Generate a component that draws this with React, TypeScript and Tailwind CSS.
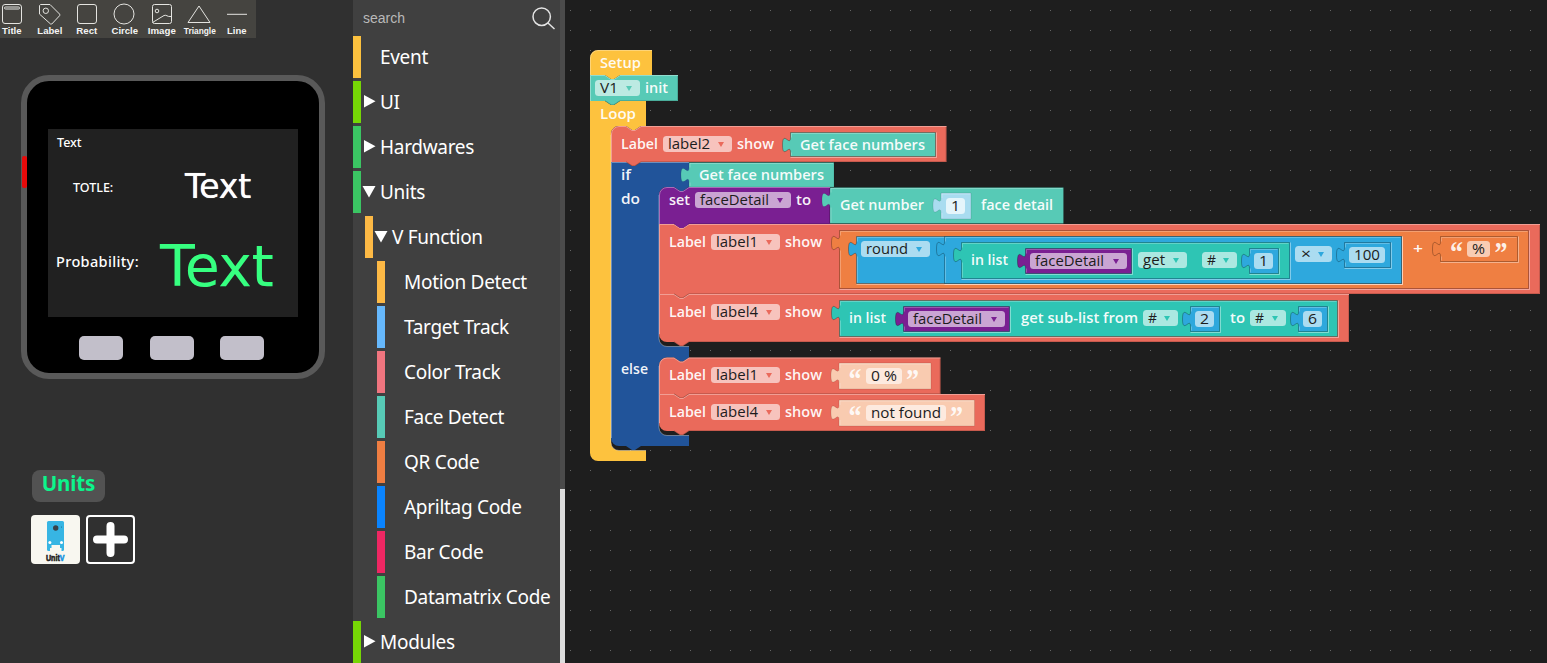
import React from "react";

/* ---------- UI designer toolbar ---------- */

const tools: { name: string; width: number; icon: React.ReactNode }[] = [
  {
    name: "Title",
    width: 19.5,
    icon: (
      <>
        <rect x="1.5" y="1.5" width="19" height="19" rx="2.5" />
        <rect x="3.5" y="4" width="15" height="2" rx="1" />
      </>
    ),
  },
  {
    name: "Label",
    width: 25,
    icon: (
      <>
        <path d="M1.5 2.5v8.6L12.6 21l1.2 0L21.7 12.6v-1.4L12 1.5H2.6z" />
        <circle cx="7.8" cy="7.8" r="2.7" />
      </>
    ),
  },
  { name: "Rect", width: 21, icon: <rect x="1.5" y="1.5" width="19" height="19" rx="2.5" /> },
  { name: "Circle", width: 26.5, icon: <circle cx="11" cy="11" r="10" /> },
  {
    name: "Image",
    width: 28,
    icon: (
      <>
        <rect x="1.5" y="1.5" width="19" height="19" rx="2" />
        <circle cx="6" cy="8" r="1.8" />
        <path d="M1.500 19.500 13 12.500q2-.6 3 .3t4.500.7" />
      </>
    ),
  },
  { name: "Triangle", width: 32, icon: <path d="M11 3 22 19.500H0z" /> },
  { name: "Line", width: 19.5, icon: <path d="M1 11.3h20" /> },
];

function Toolbar() {
  return (
    <div className="-ml-[7px] flex h-[38px] w-[263px] bg-[#454440]">
      {tools.map((t) => (
        <div key={t.name} className="flex w-[37.5px] shrink-0 flex-col items-center pt-[3px]">
          <svg width="22" height="22" viewBox="0 0 22 22" fill="none" stroke="#e4e4e0" strokeWidth="1" className="overflow-visible">
            {t.icon}
          </svg>
          <svg width="37" height="12" viewBox="0 0 37 12" className="overflow-visible">
            <text
              x="18.8"
              y="9"
              textAnchor="middle"
              fontFamily="Liberation Sans"
              fontWeight="700"
              fontSize={t.name === "Triangle" ? 8.5 : 9.5}
              textLength={t.width}
              lengthAdjust="spacingAndGlyphs"
              fill="#f4f4f4"
            >
              {t.name}
            </text>
          </svg>
        </div>
      ))}
    </div>
  );
}

function Device() {
  return (
    <div className="relative mt-[37px] ml-[21px] h-[304px] w-[304px] rounded-[28px] border-[6px] border-[#595959] bg-black">
      <div className="absolute top-[75px] -left-[5px] h-[32px] w-[5px] rounded-[2px] bg-[#e60a0a]" />
      <div className="relative mt-[48px] ml-[21px] h-[188px] w-[250px] bg-[#212121] font-['Noto_Sans',sans-serif] text-white">
        <span className="absolute top-[5px] left-[9px] text-[12.5px] leading-[18px] font-medium">Text</span>
        <span className="absolute top-[50px] left-[25px] text-[12.5px] leading-[18px] font-medium">
          TOTLE:
        </span>
        <span className="absolute top-[37px] left-[137px] font-['DejaVu_Sans'] text-[33px] leading-[42px] tracking-[-0.2px] [text-shadow:0_0_0.7px_white]">
          Text
        </span>
        <span className="absolute top-[122px] left-[8px] text-[14.5px] leading-[20px] font-medium tracking-[0.35px]">
          Probability:
        </span>
        <span className="absolute top-[101px] left-[112px] font-['DejaVu_Sans'] text-[57px] leading-[72px] tracking-[-0.5px] text-[#36ff80]">
          Text
        </span>
      </div>
      <div className="mt-[19px] ml-[52px] flex gap-[26.5px]">
        {[0, 1, 2].map((i) => (
          <div key={i} className="h-6 w-11 rounded-[5px] bg-[#c2bfca]" />
        ))}
      </div>
    </div>
  );
}

function UnitsPanel() {
  return (
    <div className="mt-[91px] ml-[31px]">
      <div className="ml-px flex h-[32px] w-[73px] justify-center rounded-lg bg-[#525252] font-['Noto_Sans',sans-serif] text-[20.5px] leading-[27px] font-bold tracking-[-0.1px] text-[#0cf58c]">
        Units
      </div>
      <div className="mt-[13px] flex gap-[6px]">
        <div className="h-[49px] w-[49px] overflow-hidden rounded-[4px] bg-[#f8f7f0]">
          <svg width="49" height="49" viewBox="0 0 49 49">
            <rect x="16" y="6" width="17" height="30" rx="1.5" fill="#37b5e3" />
            <circle cx="24.7" cy="13" r="2.7" fill="#3a4248" />
            <circle cx="30.5" cy="12" r=".5" fill="#1b5f7c" />
            <circle cx="18.9" cy="27.5" r="1.5" fill="#fff" />
            <circle cx="30.5" cy="27.5" r="1.5" fill="#fff" />
            <path d="M20.5 30h8.500v6h-8.500z" fill="#f8f7f0" />
            <path d="M19 33h2v3h-2zM28.500 33h2v3h-2z" fill="#f8f7f0" />
            <text x="15" y="45.500" fontFamily="Liberation Sans" fontWeight="900" fontSize="9" textLength="18.500" lengthAdjust="spacingAndGlyphs" fill="#222" stroke="#222" strokeWidth=".6">
              Unit<tspan fill="#1693df" stroke="#1693df">V</tspan>
            </text>
          </svg>
        </div>
        <div className="h-[49px] w-[49px] rounded-[4px] border-2 border-white">
          <svg width="45" height="45" viewBox="0 0 45 45" stroke="#fff" strokeWidth="8" strokeLinecap="round">
            <path d="M22.500 9v27M9 22.500h27" />
          </svg>
        </div>
      </div>
    </div>
  );
}

/* ---------- Toolbox ---------- */

type Row = { label: string; bar: string; indent: string; state?: "open" | "closed" };

const rows: Row[] = [
  { label: "Event", bar: "bg-[#fcc13e]", indent: "ml-0" },
  { label: "UI", bar: "bg-[#76d605]", indent: "ml-0", state: "closed" },
  { label: "Hardwares", bar: "bg-[#3bc563]", indent: "ml-0", state: "closed" },
  { label: "Units", bar: "bg-[#3bc563]", indent: "ml-0", state: "open" },
  { label: "V Function", bar: "bg-[#fdb945]", indent: "ml-3", state: "open" },
  { label: "Motion Detect", bar: "bg-[#fdb945]", indent: "ml-6" },
  { label: "Target Track", bar: "bg-[#66b8fc]", indent: "ml-6" },
  { label: "Color Track", bar: "bg-[#f0757f]", indent: "ml-6" },
  { label: "Face Detect", bar: "bg-[#57cab6]", indent: "ml-6" },
  { label: "QR Code", bar: "bg-[#ef7e42]", indent: "ml-6" },
  { label: "Apriltag Code", bar: "bg-[#0a84ff]", indent: "ml-6" },
  { label: "Bar Code", bar: "bg-[#ef2763]", indent: "ml-6" },
  { label: "Datamatrix Code", bar: "bg-[#3bc563]", indent: "ml-6" },
  { label: "Modules", bar: "bg-[#76d605]", indent: "ml-0", state: "closed" },
];

function Toolbox() {
  return (
    <div className="flex h-full w-[212px] shrink-0 bg-[#404040]">
      <div className="flex w-[207px] flex-col overflow-hidden">
        <div className="flex h-[36px] shrink-0 items-center justify-between pr-[4px] pl-[10px]">
          <span className="font-['Liberation_Sans'] text-[14px] text-[#b9b9b9]">search</span>
          <svg width="26" height="26" viewBox="0 0 26 26" fill="none" stroke="#e4e4e4" strokeWidth="1.5">
            <circle cx="11.700" cy="11.700" r="8.700" />
            <path d="m18 18 6.500 6" />
          </svg>
        </div>
        {rows.map((r) => (
          <div key={r.label} className={`mb-[3px] flex h-[42px] shrink-0 items-center ${r.indent}`}>
            <div className={`h-full w-2 shrink-0 ${r.bar}`} />
            <svg width="19" height="14" viewBox="0 0 19 14" fill="#fff" className="shrink-0">
              {r.state === "closed" && <path d="M3 0v12.500L14.500 6.200z" />}
              {r.state === "open" && <path d="M1.500 1h13L8 12.500z" />}
            </svg>
            <span className="pt-px font-['Noto_Sans',sans-serif] text-[19px] leading-none tracking-[-0.3px] whitespace-nowrap text-white">
              {r.label}
            </span>
          </div>
        ))}
      </div>
      <div className="flex h-full w-[5px] flex-col justify-end bg-[#4b4b4b]">
        <div className="h-[174px] w-full bg-[#dcdcdc]" />
      </div>
    </div>
  );
}

/* ---------- Block canvas ---------- */

const C = {
  yellow: "#fdc23e",
  mint: "#57cab6",
  red: "#ea6a5b",
  navy: "#21549a",
  purple: "#7a1f92",
  orange: "#ef7f42",
  blue: "#2ea8dd",
  teal: "#2ec5b4",
  sky: "#a9dcf0",
  peach: "#f9cbb0",
};

const NOTCH = "l6,4 3,0 6,-4";
const NOTCH_BACK = "l-6,4 -3,0 -6,-4";
const TAB_UP = "V20c0,-10 -8,8 -8,-7.500s8,2.500 8,-7.500";

/** A statement block: notch on top, tab below. */
function Stack({ x, y, w, h, c, first, last }: { x: number; y: number; w: number; h: number; c: string; first?: boolean; last?: boolean }) {
  const start = first ? "M0,8A8,8 0,0,1 8,0" : "M0,0";
  const left = last ? `H8a8,8 0,0,1 -8,-8` : "H0";
  const topEdge = `${start}H15${NOTCH}H${w}`;
  return (
    <g transform={`translate(${x},${y})`}>
      <path d={`${topEdge}V${h}H30${NOTCH_BACK}${left}z`} fill={c} />
      <path d={`M.5,${h - (last ? 8 : 0)}V${first ? 8 : 0.5}${first ? "A7.500,7.500 0,0,1 8,.5" : ""}H15${NOTCH}H${w}`} fill="none" stroke="#fff" strokeOpacity=".35" />
      <path d={`M${w - 0.5},1V${h - 0.5}H30${NOTCH_BACK}`} fill="none" stroke="#000" strokeOpacity=".15" />
    </g>
  );
}

/** A value block with its puzzle tab on the left side. */
function Value({ x, y, w, h, c, plain }: { x: number; y: number; w: number; h: number; c: string; plain?: boolean }) {
  const d = `M0,0H${w}V${h}H0${TAB_UP}z`;
  return (
    <g transform={`translate(${x},${y})`}>
      {!plain && <path d={`M0,${h + 1}H${w + 1}V0`} fill="none" stroke="#fff" strokeOpacity=".4" />}
      <path d={d} fill={c} stroke="#000" strokeOpacity={plain ? 0.1 : 0.28} />
      <path d={`M1,${h - 1}V20M1,5V1H${w - 1}`} fill="none" stroke="#fff" strokeOpacity=".25" />
    </g>
  );
}

/** Text fitted to a known width. */
function T({ x, y, w, s, dark }: { x: number; y: number; w: number; s: string; dark?: boolean }) {
  return (
    <text x={x} y={y} textLength={w} lengthAdjust="spacingAndGlyphs" fontSize="15" fontWeight={dark ? 400 : 600} fill={dark ? "#1c1c1c" : "#fff"} fillOpacity={dark ? 1 : 0.95}>
      {s}
    </text>
  );
}

/** Editable field, optionally a dropdown with an arrow in the block colour. */
function Field({ x, y, w, s, tw, tx = 5, arrow, light }: { x: number; y: number; w: number; s: string; tw: number; tx?: number; arrow?: string; light?: boolean }) {
  return (
    <g>
      <rect x={x} y={y} width={w} height="16" rx="3.500" fill="#fff" fillOpacity={light ? 0.7 : 0.6} />
      <T x={x + tx} y={y + 13} w={tw} s={s} dark />
      {arrow && <path d={`M${x + w - 14},${y + 6}h6l-3,5z`} fill={arrow} />}
    </g>
  );
}

function Quotes({ l, r, y }: { l: number; r: number; y: number }) {
  return (
    <g fontFamily="Liberation Serif" fontWeight="700" fontSize="29" fill="#fff" fillOpacity=".9">
      <text x={l} y={y} textLength="13" lengthAdjust="spacingAndGlyphs">“</text>
      <text x={r} y={y} textLength="13" lengthAdjust="spacingAndGlyphs">”</text>
    </g>
  );
}

function Canvas() {
  return (
    <div className="h-full flex-1 overflow-hidden bg-[#1e1e1e]">
      <svg width="982" height="663" viewBox="565 0 982 663" fontFamily="'Open Sans', sans-serif">
        <defs>
          <pattern id="grid" x="570" y="10" width="20" height="20" patternUnits="userSpaceOnUse">
            <rect width="1" height="1" fill="#666" />
          </pattern>
        </defs>
        <rect x="565" width="982" height="663" fill="url(#grid)" />

        {/* Loop */}
        <path d={`M590,101h15${NOTCH}H646V126H641${NOTCH_BACK}H619a8,8 0,0,0 -8,8V442.500a8,8 0,0,0 8,8H646V461H598a8,8 0,0,1 -8,-8z`} fill={C.yellow} />
        <path d="M611,135V442.500a8,8 0,0,0 8,8H646" fill="none" stroke="#fff" strokeOpacity=".35" />
        {/* Setup */}
        <Stack x={590} y={75} w={88} h={26} c={C.mint} />
        <path d={`M590,58a8,8 0,0,1 8,-8H652V75H620${NOTCH_BACK}H590z`} fill={C.yellow} />
        <path d="M590.500,75V58a7.500,7.500 0,0,1 7.500,-7.500H652" fill="none" stroke="#fff" strokeOpacity=".3" />
        <T x={600} y={68} w={41} s="Setup" />
        <Field x={595} y={80} w={45} s="V1" tw={18} arrow={C.mint} />
        <T x={645} y={93} w={23} s="init" />
        <T x={600} y={119} w={36} s="Loop" />

        {/* if / do / else */}
        <path d={`M611,162h15${NOTCH}H689V187H689${NOTCH_BACK}H667a8,8 0,0,0 -8,8V338.500a8,8 0,0,0 8,8H689V357.500${NOTCH_BACK}H667a8,8 0,0,0 -8,8V427.500a8,8 0,0,0 8,8H689V446H641${NOTCH_BACK}H619a8,8 0,0,1 -8,-8z`} fill={C.navy} />
        <path d="M611.500,438V162.500H689M659,195V338.500a8,8 0,0,0 8,8H689M659,366V427.500a8,8 0,0,0 8,8H689" fill="none" stroke="#fff" strokeOpacity=".35" />
        <Stack x={611} y={126} w={335.5} h={36} c={C.red} first />
        <T x={621} y={149} w={37} s="Label" />
        <Field x={663} y={136} w={69} s="label2" tw={42} arrow={C.red} />
        <T x={737} y={149} w={37} s="show" />
        <Value x={790.5} y={132.5} w={145} h={24} c={C.mint} />
        <T x={800} y={150} w={125} s="Get face numbers" />
        <T x={621} y={180} w={10} s="if" />
        <Value x={689} y={162.5} w={145} h={24.5} c={C.mint} plain />
        <T x={699} y={180} w={125} s="Get face numbers" />
        <T x={621} y={204} w={19} s="do" />

        {/* set faceDetail */}
        <Stack x={659} y={187} w={171} h={37} c={C.purple} first />
        <Value x={830} y={187.5} w={233.5} h={36} c={C.mint} plain />
        <T x={669} y={205} w={21} s="set" />
        <Field x={695} y={192} w={96} s="faceDetail" tw={69} arrow={C.purple} />
        <T x={796} y={205} w={15} s="to" />
        <T x={840} y={210} w={84} s="Get number" />
        <Value x={941} y={193} w={30} h={26} c={C.sky} plain />
        <Field x={946} y={198} w={19} s="1" tw={9} light />
        <T x={981} y={210} w={72} s="face detail" />

        {/* label1 show round(...) + % */}
        <Stack x={659} y={224} w={881} h={70} c={C.red} />
        <path d={`M674,224${NOTCH}z`} fill={C.purple} />
        <T x={669} y={247} w={37} s="Label" />
        <Field x={711} y={234} w={69} s="label1" tw={42} arrow={C.red} />
        <T x={785} y={247} w={37} s="show" />
        <Value x={839.5} y={230.5} w={689} h={58} c={C.orange} />
        <Value x={856.5} y={236.5} w={545} h={47} c={C.blue} />
        <Field x={861} y={241} w={69} s="round" tw={42} arrow={C.blue} />
        <Value x={944.5} y={236.5} w={457} h={47} c={C.blue} />
        <Value x={961.5} y={242.5} w={328} h={36} c={C.teal} />
        <T x={971} y={265} w={37} s="in list" />
        <Value x={1025.500} y={248.5} w={106} h={25} c={C.purple} />
        <Field x={1030} y={253} w={97} s="faceDetail" tw={69} arrow={C.purple} />
        <Field x={1138} y={252} w={49} s="get" tw={22} arrow={C.teal} />
        <Field x={1202} y={252} w={35} s="#" tw={9} arrow={C.teal} />
        <Value x={1249.500} y={248.5} w={29} h={25} c={C.blue} />
        <Field x={1254} y={253} w={19} s="1" tw={9} />
        <Field x={1295} y={246} w={37} s="×" tw={10} tx={6} arrow={C.blue} />
        <Value x={1344.500} y={242.5} w={46} h={25} c={C.blue} />
        <Field x={1349} y={247} w={36} s="100" tw={26} />
        <T x={1413} y={254} w={10} s="+" />
        <Value x={1440.500} y={236.5} w={77} h={25} c={C.orange} />
        <Quotes l={1450} r={1494.500} y={261.5} />
        <Field x={1467} y={241} w={23} s="%" tw={13} />

        {/* label4 show sub-list */}
        <Stack x={659} y={294} w={690} h={48} c={C.red} last />
        <T x={669} y={317} w={37} s="Label" />
        <Field x={711} y={304} w={69} s="label4" tw={42} arrow={C.red} />
        <T x={785} y={317} w={37} s="show" />
        <Value x={839.5} y={300.5} w={498} h={36} c={C.teal} />
        <T x={849} y={323} w={37} s="in list" />
        <Value x={903.5} y={306.5} w={106} h={25} c={C.purple} />
        <Field x={908} y={311} w={97} s="faceDetail" tw={69} arrow={C.purple} />
        <T x={1021} y={323} w={117} s="get sub-list from" />
        <Field x={1143} y={310} w={35} s="#" tw={9} arrow={C.teal} />
        <Value x={1190.500} y={306.5} w={29} h={25} c={C.blue} />
        <Field x={1195} y={311} w={19} s="2" tw={9} />
        <T x={1230} y={323} w={15} s="to" />
        <Field x={1250} y={310} w={36} s="#" tw={9} arrow={C.teal} />
        <Value x={1298.500} y={306.5} w={29} h={25} c={C.blue} />
        <Field x={1303} y={311} w={19} s="6" tw={9} />

        {/* else branch */}
        <T x={621} y={374} w={27} s="else" />
        <Stack x={659} y={357.5} w={281.5} h={36.5} c={C.red} first />
        <T x={669} y={380} w={37} s="Label" />
        <Field x={711} y={367} w={69} s="label1" tw={42} arrow={C.red} />
        <T x={785} y={380} w={37} s="show" />
        <Value x={839} y={363} w={92} h={26} c={C.peach} plain />
        <Quotes l={848.5} r={906} y={388.5} />
        <Field x={866} y={368} w={36} s="0 %" tw={26} />
        <Stack x={659} y={394} w={326} h={37} c={C.red} last />
        <T x={669} y={417} w={37} s="Label" />
        <Field x={711} y={404} w={69} s="label4" tw={42} arrow={C.red} />
        <T x={785} y={417} w={37} s="show" />
        <Value x={839} y={400} w={135.500} h={26} c={C.peach} plain />
        <Quotes l={848.5} r={950} y={425.500} />
        <Field x={866} y={405} w={80} s="not found" tw={70} />
      </svg>
    </div>
  );
}

export default function App() {
  return (
    <div className="flex h-[663px] w-[1547px] overflow-hidden bg-[#303030]">
      <div className="flex w-[353px] shrink-0 flex-col">
        <Toolbar />
        <Device />
        <UnitsPanel />
      </div>
      <Toolbox />
      <Canvas />
    </div>
  );
}
